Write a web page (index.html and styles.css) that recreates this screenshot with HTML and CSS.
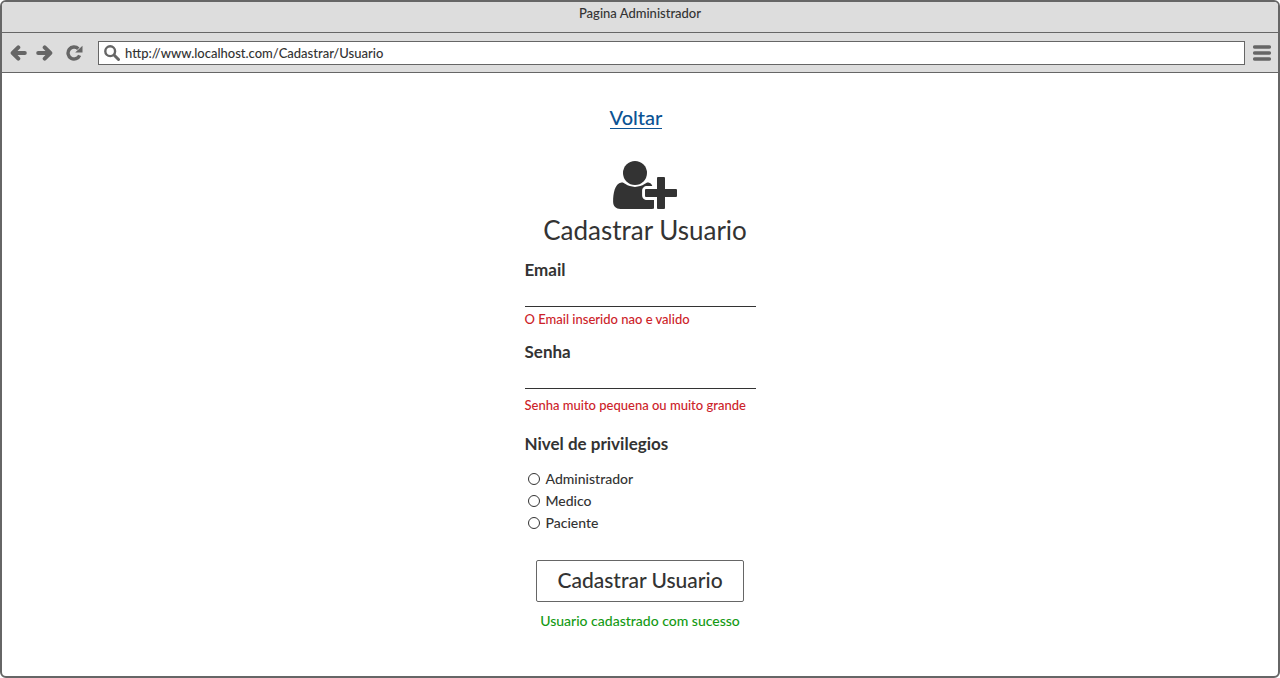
FILE: index.html
```html
<!DOCTYPE html>
<html lang="pt">
<head>
<meta charset="utf-8">
<meta name="viewport" content="width=device-width, initial-scale=1">
<title>Pagina Administrador</title>
<link rel="stylesheet" href="styles.css">
</head>
<body>
<div class="browser">
  <header class="titlebar">Pagina Administrador</header>
  <nav class="toolbar" aria-label="Navegador">
    <div class="nav-buttons">
      <button class="icon-button" type="button" aria-label="Anterior">
        <svg width="17" height="16" viewBox="0 0 17 16"><path d="M8.300 2.400 2.700 8l5.600 5.600M3 8h11.800" fill="none" stroke="currentColor" stroke-width="4" stroke-linecap="round" stroke-linejoin="round"/></svg>
      </button>
      <button class="icon-button" type="button" aria-label="Seguinte">
        <svg width="17" height="16" viewBox="0 0 17 16"><path d="M8.700 2.400 14.300 8l-5.600 5.600M14 8H2.200" fill="none" stroke="currentColor" stroke-width="4" stroke-linecap="round" stroke-linejoin="round"/></svg>
      </button>
      <button class="icon-button reload" type="button" aria-label="Recarregar">
        <svg width="17" height="16" viewBox="0 0 17 16"><path d="M12.300 3.800A6 6 0 1 0 13.600 10.300" fill="none" stroke="currentColor" stroke-width="3.400"/><path d="M16.500 .8v6.800H9.200z" fill="currentColor"/></svg>
      </button>
    </div>
    <label class="address">
      <svg class="search-icon" width="16" height="16" viewBox="0 0 16 16" aria-hidden="true"><circle cx="6.200" cy="6.200" r="4.900" fill="none" stroke="currentColor" stroke-width="2.400"/><path d="m10.300 10.300 4.200 4.200" stroke="currentColor" stroke-width="3" stroke-linecap="round"/></svg>
      <input class="address-input" type="text" aria-label="Endereco" value="http://www.localhost.com/Cadastrar/Usuario">
    </label>
    <button class="icon-button" type="button" aria-label="Menu">
      <svg width="18" height="16" viewBox="0 0 18 16"><path d="M1.800 2h14.400M1.800 8h14.400M1.800 14h14.400" stroke="currentColor" stroke-width="3.700" stroke-linecap="round"/></svg>
    </button>
  </nav>
  <main class="page">
    <a class="back" href="#">Voltar</a>
    <div class="heading">
      <svg width="66" height="50" viewBox="0 0 66 50" aria-hidden="true" fill="currentColor">
        <path d="M9.500 22.500C11 22.300 12 23 13.500 24.100C16 25.900 19.300 26.900 23 26.900C26.700 26.900 30 25.900 32.500 24.100C34 23 35 22.300 36.500 22.500C38.300 22.800 39.400 24 40.300 25.900H35C32.200 25.900 30.100 28 30.100 30.700V35.200C30.100 38 32.200 40.100 35 40.100H42V48.500C40.700 49 39.400 49 38 49H8.500C4 49 1.100 46.200 1.100 41.500C1.100 34 2.600 23.500 9.500 22.500Z"/>
        <circle cx="23" cy="13" r="12"/>
        <path d="M46 17h6a1 1 0 0 1 1 1v11h11a1 1 0 0 1 1 1v6a1 1 0 0 1-1 1H53v11a1 1 0 0 1-1 1h-6a1 1 0 0 1-1-1V37H34a1 1 0 0 1-1-1v-6a1 1 0 0 1 1-1h11V18a1 1 0 0 1 1-1Z"/>
      </svg>
      <h1 class="title">Cadastrar Usuario</h1>
    </div>
    <form class="form">
      <div class="field">
        <label class="label" for="email">Email</label>
        <input class="text-input" id="email" type="email" aria-describedby="email-error">
        <p class="error" id="email-error">O Email inserido nao e valido</p>
      </div>
      <div class="field password">
        <label class="label" for="senha">Senha</label>
        <input class="text-input" id="senha" type="password" aria-describedby="senha-error">
        <p class="error" id="senha-error">Senha muito pequena ou muito grande</p>
      </div>
      <fieldset class="levels">
        <legend class="label">Nivel de privilegios</legend>
        <label class="option"><input class="radio" type="radio" name="nivel">Administrador</label>
        <label class="option"><input class="radio" type="radio" name="nivel">Medico</label>
        <label class="option"><input class="radio" type="radio" name="nivel">Paciente</label>
      </fieldset>
      <button class="submit" type="button">Cadastrar Usuario</button>
      <p class="success" role="status">Usuario cadastrado com sucesso</p>
    </form>
  </main>
</div>
</body>
</html>
```
FILE: styles.css
```css
* {
  box-sizing: border-box;
}

body {
  margin: 0;
  background: #fff;
  color: #333;
  font-family: Lato, "Open Sans", sans-serif;
  font-size: 14px;
  font-weight: 500;
  line-height: 20px;
}

button,
input {
  font: inherit;
  color: inherit;
}

.browser {
  display: flex;
  flex-direction: column;
  min-height: 100vh;
  border: 2px solid #666;
  border-radius: 6px;
  overflow: hidden;
}

.titlebar {
  height: 31px;
  padding-top: 1px;
  border-bottom: 1px solid #666;
  background: #ddd;
  font-size: 13px;
  text-align: center;
}

.toolbar {
  display: flex;
  align-items: center;
  gap: 8px;
  height: 40px;
  padding: 0 7px 0 8px;
  border-bottom: 1px solid #666;
  background: #ddd;
  color: #666;
}

.nav-buttons {
  display: flex;
  gap: 9px;
  margin-right: 7px;
}

.icon-button {
  display: flex;
  padding: 0;
  border: 0;
  background: none;
  cursor: pointer;
}

.reload {
  margin-left: 4px;
}

.address {
  display: flex;
  flex: 1;
  align-items: center;
  gap: 5px;
  height: 24px;
  padding: 0 5px;
  border: 1px solid #666;
  background: #fff;
}

.address-input {
  flex: 1;
  min-width: 0;
  padding: 0;
  border: 0;
  outline: 0;
  background: none;
  color: #333;
  font-size: 13px;
}

.page {
  display: flex;
  flex: 1;
  flex-direction: column;
  align-items: center;
  padding: 34px 16px 44px;
}

.back {
  margin-right: 8px;
  border-bottom: 1px solid #0b5394;
  color: #0b5394;
  font-size: 20px;
  line-height: 21px;
  text-decoration: none;
}

.heading {
  display: flex;
  flex-direction: column;
  align-items: center;
  margin: 31px 0 0 10px;
}

.title {
  margin: 4px 0 0;
  font-size: 26px;
  font-weight: 400;
  line-height: 32px;
}

.form {
  display: flex;
  flex-direction: column;
  width: 231px;
  max-width: 100%;
  margin-top: 14px;
}

.field {
  display: flex;
  flex-direction: column;
}

.label {
  padding: 0;
  font-size: 17px;
  font-weight: 700;
}

.text-input {
  width: 100%;
  height: 27px;
  padding: 0;
  border: 0;
  border-bottom: 1px solid #333;
  outline: 0;
  background: none;
}

.error {
  margin: 2px 0 0;
  color: #cc2229;
  font-size: 13px;
}

.password {
  margin-top: 13px;
}

.password .error {
  margin-top: 6px;
}

.levels {
  min-width: 0;
  margin: 19px 0 0;
  padding: 14px 0 0;
  border: 0;
}

.option {
  display: flex;
  align-items: center;
  gap: 6px;
  height: 22px;
  padding-left: 3px;
}

.radio {
  width: 12px;
  height: 12px;
  margin: 0;
  border: 1px solid #333;
  border-radius: 50%;
  background: #fff;
  appearance: none;
}

.radio:checked {
  background: #333;
  box-shadow: inset 0 0 0 2px #fff;
}

.submit {
  align-self: center;
  height: 42px;
  margin-top: 26px;
  padding: 0 20px 2px;
  border: 1px solid #666;
  border-radius: 2px;
  background: #fff;
  font-size: 21px;
  cursor: pointer;
}

.success {
  margin: 9px 0 0;
  color: #149a14;
  text-align: center;
}
```
